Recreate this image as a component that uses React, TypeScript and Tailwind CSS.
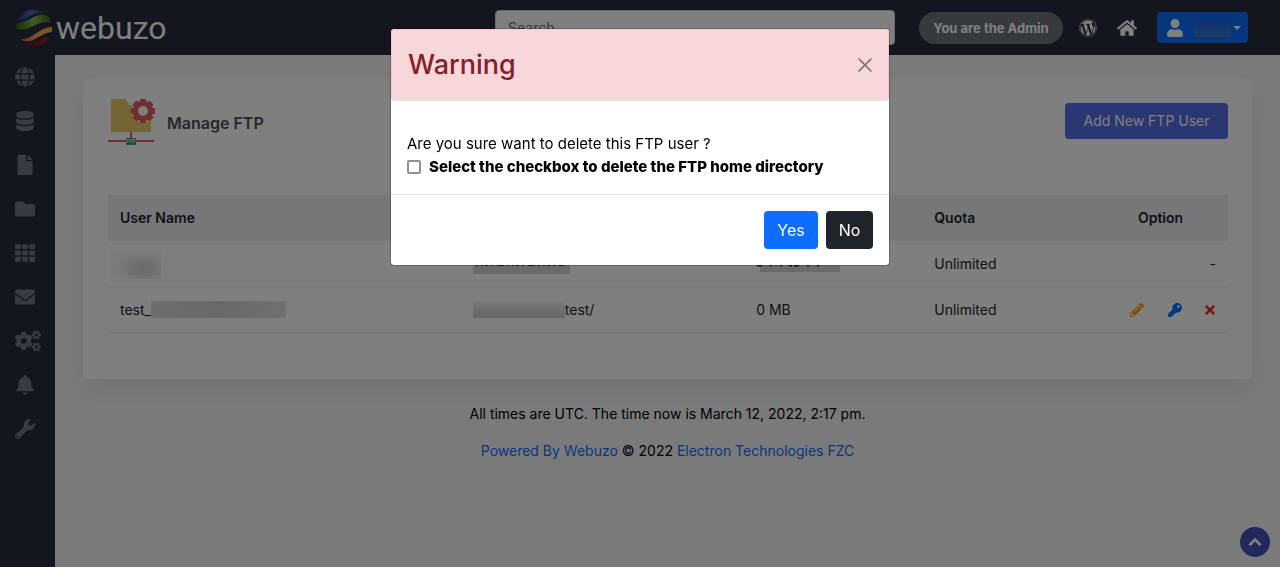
import type { ReactNode } from 'react'
import {
  FaBell,
  FaChevronUp,
  FaCogs,
  FaDatabase,
  FaEnvelope,
  FaFile,
  FaFolder,
  FaGlobe,
  FaHome,
  FaKey,
  FaPencilAlt,
  FaTh,
  FaTimes,
  FaUser,
  FaWordpress,
  FaWrench,
} from 'react-icons/fa'

const menu = [
  { name: 'Domain', icon: FaGlobe, size: 'h-5 w-auto' },
  { name: 'Database', icon: FaDatabase, size: 'h-5 w-auto' },
  { name: 'Files', icon: FaFile, size: 'h-5 w-auto' },
  { name: 'FTP', icon: FaFolder, size: 'h-5 w-auto' },
  { name: 'Apps', icon: FaTh, size: 'h-5 w-auto' },
  { name: 'Email', icon: FaEnvelope, size: 'h-5 w-auto' },
  { name: 'Configuration', icon: FaCogs, size: 'h-6 w-[26px] shrink-0' },
  { name: 'Notifications', icon: FaBell, size: 'h-5 w-auto' },
  { name: 'Tools', icon: FaWrench, size: 'h-5 w-auto' },
]

function Logo() {
  return (
    <a href="#" className="flex items-center gap-1 text-white">
      <svg viewBox="0 0 38 38" className="size-[38px]" aria-hidden="true">
        <defs>
          <linearGradient id="blue" x1="0" x2="1">
            <stop offset="0" stopColor="#243c80" />
            <stop offset=".5" stopColor="#4a6cc0" />
            <stop offset="1" stopColor="#1d2c66" />
          </linearGradient>
          <linearGradient id="green" x1="0" x2="1">
            <stop offset="0" stopColor="#2c5c10" />
            <stop offset=".5" stopColor="#82b45a" />
            <stop offset="1" stopColor="#336414" />
          </linearGradient>
          <linearGradient id="orange" x1="0" x2="1">
            <stop offset="0" stopColor="#d0601c" />
            <stop offset=".5" stopColor="#f0a860" />
            <stop offset="1" stopColor="#e8b430" />
          </linearGradient>
          <linearGradient id="red" x1="0" x2="1">
            <stop offset="0" stopColor="#7c1010" />
            <stop offset="1" stopColor="#b41c1c" />
          </linearGradient>
        </defs>
        <path fill="url(#blue)" d="M4 11C7 4 14 0 21 1c5 0 8 2 10 4-5-2-9-1-13 1-5 3-9 5-14 5z" />
        <path fill="url(#green)" d="M2 20c0-2 0-4 1-6 6 0 10-3 15-5 6-4 13-4 17-1 1 2 2 4 2 6-6-2-11 0-16 2-7 4-13 6-19 4z" />
        <path fill="url(#orange)" d="M7 30c5 0 10-2 14-5 6-4 11-7 17-7v5c-5 0-9 3-14 5-5 4-10 5-14 4-1 0-2-1-3-2z" />
        <path fill="url(#red)" d="M12 35c5 0 9-1 13-3 4-3 7-4 10-4-3 6-8 9-14 9-4 0-6-1-9-2z" />
      </svg>
      <span className="font-['Roboto',sans-serif] text-[32px] leading-8">webuzo</span>
    </a>
  )
}

function FtpIcon() {
  return (
    <svg viewBox="0 0 48 48" className="size-12" aria-hidden="true">
      <path fill="#e8cc68" d="M3 2h15l3 6h22v27H3z" />
      <path stroke="#e05c5c" strokeWidth="2" d="M23 35v9M0 44h46" />
      <g transform="translate(35 14)">
        <circle r="11.500" fill="#fff" />
        <g fill="#e05c5c">
          <circle r="9.500" />
          {[0, 45, 90, 135, 180, 225, 270, 315].map((a) => (
            <path key={a} d="M-4-8l1.500-4h5L4-8z" transform={`rotate(${a})`} />
          ))}
        </g>
        <circle r="5" fill="#fff" />
      </g>
      <rect x="18" y="41" width="10" height="7" fill="#38a070" />
      <text x="23" y="46" textAnchor="middle" fontSize="5" fill="#fff" fontFamily="Liberation Sans">
        FTP
      </text>
    </svg>
  )
}

function HeaderBar() {
  return (
    <header className="flex h-[55px] items-center bg-[#282c3e] pr-8 pl-[14px]">
      <Logo />
      <input
        type="text"
        aria-label="Search"
        placeholder="Search"
        className="ml-auto h-[35px] w-[400px] rounded border border-gray-300 bg-white px-3 text-sm placeholder:text-gray-500"
      />
      <span className="ml-6 w-36 rounded-full bg-[#6c757d] py-2 text-center text-[13px] leading-4 font-bold text-white">
        You are the Admin
      </span>
      <a href="#" aria-label="WordPress" className="ml-4 text-white">
        <FaWordpress className="size-[18px]" />
      </a>
      <a href="#" aria-label="Home" className="ml-5 text-white">
        <FaHome className="size-5" />
      </a>
      <button
        type="button"
        aria-label="Account"
        className="ml-5 flex h-[31px] w-[91px] items-center rounded-sm bg-[#0d6efd] pl-[9px] text-white"
      >
        <FaUser className="h-[18px] w-auto" />
        <span className="ml-[10px] h-[18px] w-[37px] bg-linear-to-b from-[#1464e4] to-[#3c78cc]" />
        <span className="ml-0.5 border-x-4 border-t-4 border-x-transparent border-t-white" />
      </button>
    </header>
  )
}

function Cell({ children }: { children?: ReactNode }) {
  return <td className="px-3 py-0">{children}</td>
}

function FtpTable() {
  return (
    <table className="mt-[50px] w-full table-fixed border-b-2 border-[#eceef0] text-left text-sm text-[#212529]">
      <colgroup>
        <col className="w-[31.5%]" />
        <col className="w-[25.3%]" />
        <col className="w-[15.9%]" />
        <col />
        <col className="w-[63px]" />
        <col className="w-[38px]" />
        <col className="w-[34px]" />
      </colgroup>
      <thead>
        <tr className="h-[46px] bg-[#ebeef1]">
          <th className="px-3 font-semibold">User Name</th>
          <th />
          <th />
          <th className="px-3 font-semibold">Quota</th>
          <th colSpan={3} className="text-center font-semibold">Option</th>
        </tr>
      </thead>
      <tbody>
        <tr className="h-[46px] border-b border-[#f0f1f3]">
          <td className="px-0.5">
            <div className="h-[30px] w-[51px] bg-[#f8f8f8] bg-radial-[at_65%_65%] from-[#d2d2d2] to-[#f8f8f8] to-60%" />
          </td>
          <Cell>
            <svg className="h-5 w-[97px] bg-[#d2d4d2]" aria-hidden="true">
              <path stroke="#2c2e30" strokeWidth="4" strokeDasharray="2 3 2 2 3 3 2 4 7 3" d="M3 10h88" />
            </svg>
          </Cell>
          <Cell>
            <svg className="h-4 w-[84px]" aria-hidden="true">
              <rect x="4" width="80" height="16" fill="#d2d4d2" />
              <path stroke="#2c2e30" strokeWidth="3" strokeDasharray="5 8 2 8 2 7 3 2" d="M1 9h68" />
            </svg>
          </Cell>
          <Cell>Unlimited</Cell>
          <td colSpan={3} className="px-3 text-right">-</td>
        </tr>
        <tr className="h-[46px]">
          <Cell>
            <div className="flex items-center">
              test_
              <span className="h-[17px] w-[135px] bg-linear-to-r from-[#dcdcdc] via-[#d2d2d2] to-[#e2e2e2]" />
            </div>
          </Cell>
          <Cell>
            <div className="flex items-center">
              <span className="h-4 w-[92px] bg-linear-to-b from-[#f0f0f0] to-[#cccccc]" />
              test/
            </div>
          </Cell>
          <Cell>0 MB</Cell>
          <Cell>Unlimited</Cell>
          <td className="pr-3">
            <button type="button" aria-label="Edit" className="ml-auto block text-[#ff9c08]">
              <FaPencilAlt className="size-[14px]" />
            </button>
          </td>
          <td className="pr-3">
            <button type="button" aria-label="Change password" className="ml-auto block text-[#0d6efd]">
              <FaKey className="size-[14px]" />
            </button>
          </td>
          <td className="pr-[11px]">
            <button type="button" aria-label="Delete" className="ml-auto block text-[#f02c2c]">
              <FaTimes className="h-[14px] w-auto" />
            </button>
          </td>
        </tr>
      </tbody>
    </table>
  )
}

function WarningModal() {
  return (
    <div className="fixed inset-0 z-20 overflow-y-auto bg-black/50 px-4">
      <div
        role="dialog"
        aria-modal="true"
        aria-labelledby="warning-title"
        className="mx-auto mt-7 max-w-[500px] rounded border border-black/20 bg-white bg-clip-padding text-black"
      >
        <div className="flex h-[72px] items-center justify-between rounded border border-[#f5c8cd] border-b-[#dee2e6] bg-[#f8d7da] px-4">
          <h2 id="warning-title" className="text-[27px] leading-8 font-medium text-[#842029]">Warning</h2>
          <button type="button" aria-label="Close" className="text-black/50">
            <svg viewBox="0 0 14 14" className="size-[14px]" stroke="currentColor" strokeWidth="1.600" strokeLinecap="round">
              <path d="M1 1l12 12M13 1L1 13" />
            </svg>
          </button>
        </div>
        <div className="px-4 pt-[31px] pb-4 text-[15px] leading-[23px]">
          <p>Are you sure want to delete this FTP user ?</p>
          <div className="flex items-center gap-2">
            <input
              id="delete-home"
              type="checkbox"
              className="size-[14px] appearance-none rounded-xs border-2 border-[#8f8f9d] bg-white"
            />
            <label htmlFor="delete-home" className="font-extrabold">
              Select the checkbox to delete the FTP home directory
            </label>
          </div>
        </div>
        <div className="flex justify-end gap-2 border-t border-[#dee2e6] p-4 text-base text-white">
          <button type="button" className="h-[38px] w-[54px] rounded bg-[#0d6efd]">Yes</button>
          <button type="button" className="h-[38px] w-[47px] rounded bg-[#212529]">No</button>
        </div>
      </div>
    </div>
  )
}

export default function App() {
  return (
    <div className="flex min-h-screen flex-col bg-[#f5f5f5] font-['Inter','Open_Sans',sans-serif] text-black">
      <HeaderBar />
      <div className="flex flex-1">
        <nav className="flex w-[55px] shrink-0 flex-col gap-6 bg-[#282c3e] pt-3 pl-[15px]">
          {menu.map((item) => (
            <a key={item.name} href="#" aria-label={item.name} className="flex h-5 items-center text-[#707488]">
              <item.icon className={item.size} />
            </a>
          ))}
        </nav>
        <main className="min-w-0 flex-1 px-7 pt-6">
          <section className="rounded bg-white pt-[18px] pr-6 pb-[45px] pl-[25px] shadow-[0_12px_24px_rgba(18,38,120,0.06)]">
            <div className="flex h-12 items-center">
              <FtpIcon />
              <h1 className="ml-[11px] pt-1 text-base font-semibold text-[#495057]">Manage FTP</h1>
              <button type="button" className="ml-auto h-9 w-[163px] rounded-sm bg-[#556ee6] text-sm text-white">
                Add New FTP User
              </button>
            </div>
            <FtpTable />
          </section>
          <footer className="pt-[25px] text-center text-sm">
            <p>All times are UTC. The time now is March 12, 2022, 2:17 pm.</p>
            <p className="mt-[17px]">
              <a href="#" className="text-[#0d6efd]">Powered By Webuzo</a> © 2022{' '}
              <a href="#" className="text-[#0d6efd]">Electron Technologies FZC</a>
            </p>
          </footer>
        </main>
      </div>
      <button
        type="button"
        aria-label="Back to top"
        className="fixed right-2.5 bottom-2.5 flex size-[30px] items-center justify-center rounded-full bg-[#4051b8] text-white"
      >
        <FaChevronUp className="size-[14px]" stroke="currentColor" strokeWidth="30" />
      </button>
      <WarningModal />
    </div>
  )
}
